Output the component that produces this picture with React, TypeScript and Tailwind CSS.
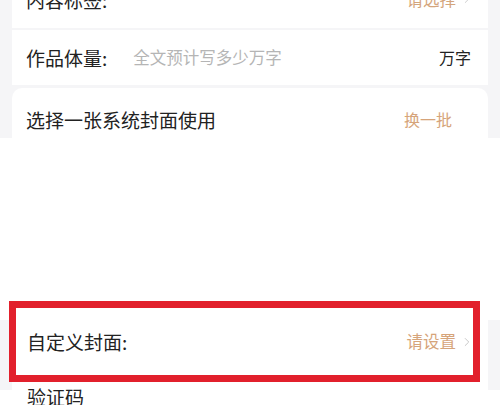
import { ChevronRight } from 'lucide-react';

const font = { fontFamily: '"Noto Sans CJK SC", "Noto Sans", sans-serif' };

export default function App() {
  return (
    <div className="relative h-[405px] w-[500px] overflow-hidden bg-white text-[#222]" style={font}>
      {/* top form section */}
      <div className="bg-[#f5f5f7] px-[12px]">
        <div className="-mt-[30px] flex h-[58px] items-center justify-between bg-white pl-[14px] pr-[14px] leading-[19px]">
          <span className="text-[19px]">内容标签:</span>
          <span className="flex items-center gap-[4px] text-[16.5px] text-[#d4a57c]">
            请选择
            <ChevronRight className="h-[14px] w-[14px] text-[#c8c8c8]" strokeWidth={1.5} />
          </span>
        </div>
        <div className="mt-[2px] flex h-[55px] items-center bg-white pl-[14px] pr-[17px] leading-[19px]">
          <span className="text-[19px]">作品体量:</span>
          <span className="ml-[26px] flex-1 text-[16.5px] text-[#b5b5b5]">全文预计写多少万字</span>
          <span className="text-[16px]">万字</span>
        </div>
        <div className="mt-[3px] h-[50px] rounded-t-[10px] bg-white pl-[14px] pr-[36px] pt-[22px] leading-[19px]">
          <div className="flex h-[19px] items-center justify-between">
            <span className="text-[19px]">选择一张系统封面使用</span>
            <span className="text-[16px] text-[#d6a47a]">换一批</span>
          </div>
        </div>
      </div>

      {/* blank area */}
      <div className="h-[182px] bg-white" />

      {/* custom cover */}
      <div className="bg-[#f5f5f7] px-[12px]">
        <div className="h-[70px] bg-white pl-[15px] pr-[14px] pt-[12px] leading-[19px]">
          <div className="flex h-[19px] items-center justify-between">
            <span className="text-[19px]">自定义封面:</span>
            <span className="flex items-center gap-[4px] text-[16.5px] text-[#d6a47a]">
              请设置
              <ChevronRight className="h-[14px] w-[14px] text-[#c0c0c0]" strokeWidth={1.5} />
            </span>
          </div>
        </div>
      </div>
      <div className="-mt-[3px] px-[27px] text-[19px] leading-[19px]">验证码</div>

      {/* annotation box */}
      <div className="absolute left-[9px] top-[301px] h-[81px] w-[471px] border-[7px] border-[#e2202c]" />
    </div>
  );
}
